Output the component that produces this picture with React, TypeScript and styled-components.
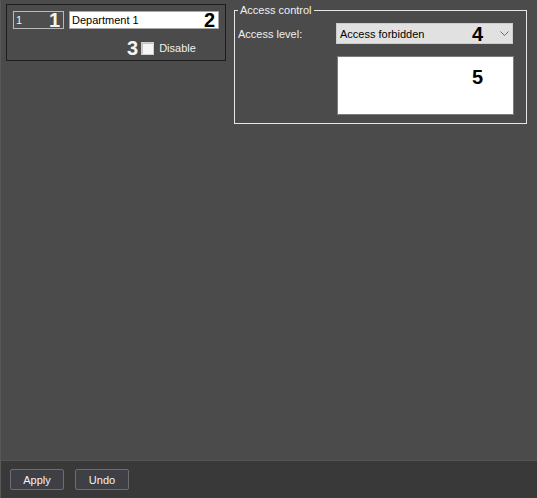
import React from "react";
import styled, { createGlobalStyle } from "styled-components";

const GlobalStyle = createGlobalStyle`
  html, body {
    margin: 0;
    padding: 0;
    background: #4b4b4b;
  }
  body {
    font-family: "Liberation Sans", Arial, sans-serif;
    font-size: 11px;
  }
`;

const Window = styled.div`
  width: 537px;
  height: 498px;
  display: flex;
  flex-direction: column;
  box-sizing: border-box;
  border-left: 1px solid #585858;
  overflow: hidden;
`;

const Main = styled.div`
  flex: 1;
  display: flex;
  align-items: flex-start;
  padding: 4px 0 0 5px;
  background: #4b4b4b;
`;

const Panel = styled.div`
  width: 220px;
  height: 57px;
  box-sizing: border-box;
  border: 1px solid #1c1c1c;
  padding: 6px 6px 0 6px;
  display: flex;
  flex-direction: column;
`;

const Row = styled.div`
  display: flex;
  align-items: center;
  gap: 5px;
`;

const Field = styled.div<{ $light?: boolean; $width: number }>`
  width: ${(p) => p.$width}px;
  height: 18px;
  box-sizing: border-box;
  border: 1px solid ${(p) => (p.$light ? "#a8a8a8" : "#b9b9b9")};
  background: ${(p) => (p.$light ? "#ffffff" : "#4e4e4e")};
  color: ${(p) => (p.$light ? "#000" : "#f2f2f2")};
  display: flex;
  align-items: center;
  justify-content: space-between;
  padding: 0 3px 0 2px;
  line-height: 16px;
`;

const Mark = styled.span<{ $dark?: boolean }>`
  font-size: 20px;
  font-weight: bold;
  line-height: 16px;
  color: ${(p) => (p.$dark ? "#000" : "#f4f4f4")};
`;

const CheckRow = styled.div`
  display: flex;
  align-items: center;
  height: 14px;
  margin-top: 12px;
  padding-left: 114px;
  color: #f0f0f0;
`;

const Check = styled.span`
  width: 13px;
  height: 13px;
  box-sizing: border-box;
  margin: 0 5px 0 3px;
  border: 1px solid #cfcfcf;
  background: #f6f6f6;
  box-shadow: inset 1px 1px 0 #c4c4c4;
`;

const Group = styled.fieldset`
  margin: 0 0 0 8px;
  width: 293px;
  min-width: 0;
  box-sizing: border-box;
  padding: 6px 0 8px 3px;
  border: 1px solid #e6e6e6;
`;

const Legend = styled.legend`
  padding: 0 2px;
  margin: 0;
  color: #f0f0f0;
  font-size: 11px;
  line-height: 13px;
`;

const Form = styled.div`
  display: grid;
  grid-template-columns: 98px 177px;
  row-gap: 12px;
  align-items: center;
`;

const Label = styled.span`
  color: #f0f0f0;
`;

const Select = styled.div`
  height: 21px;
  box-sizing: border-box;
  border: 1px solid #cdcdcd;
  background: #e1e1e1;
  color: #000;
  display: flex;
  align-items: center;
  padding: 0 3px 0 3px;
`;

const Spacer = styled.span`
  flex: 1;
`;

const Chevron = styled.svg`
  width: 9px;
  height: 6px;
  margin-left: 17px;
`;

const Memo = styled.div`
  grid-column: 2;
  width: 177px;
  height: 59px;
  margin-left: 1px;
  box-sizing: border-box;
  border: 1px solid #7c7c7c;
  background: #ffffff;
  padding: 12px 0 0 134px;
`;

const Bar = styled.div`
  height: 38px;
  box-sizing: border-box;
  border-top: 1px solid #535353;
  background: #393939;
  display: flex;
  gap: 11px;
  padding: 8px 0 0 9px;
`;

const Button = styled.button`
  width: 54px;
  height: 21px;
  box-sizing: border-box;
  border: 1px solid #6c6c74;
  border-radius: 2px;
  background: #3f3f46;
  color: #f2f2f2;
  font-family: "Liberation Sans", Arial, sans-serif;
  font-size: 11px;
  padding: 0;
`;

export default function App() {
  return (
    <>
      <GlobalStyle />
      <Window>
        <Main>
          <Panel>
            <Row>
              <Field $width={51}>
                <span>1</span>
                <Mark>1</Mark>
              </Field>
              <Field $light $width={150}>
                <span>Department 1</span>
                <Mark $dark>2</Mark>
              </Field>
            </Row>
            <CheckRow>
              <Mark>3</Mark>
              <Check />
              <span>Disable</span>
            </CheckRow>
          </Panel>
          <Group>
            <Legend>Access control</Legend>
            <Form>
              <Label>Access level:</Label>
              <Select>
                <span>Access forbidden</span>
                <Spacer />
                <Mark $dark>4</Mark>
                <Chevron viewBox="0 0 9 6">
                  <polyline points="0.5,0.5 4.5,4.5 8.5,0.5" fill="none" stroke="#6a6a6a" strokeWidth="1" />
                </Chevron>
              </Select>
              <Memo>
                <Mark $dark>5</Mark>
              </Memo>
            </Form>
          </Group>
        </Main>
        <Bar>
          <Button>Apply</Button>
          <Button>Undo</Button>
        </Bar>
      </Window>
    </>
  );
}
